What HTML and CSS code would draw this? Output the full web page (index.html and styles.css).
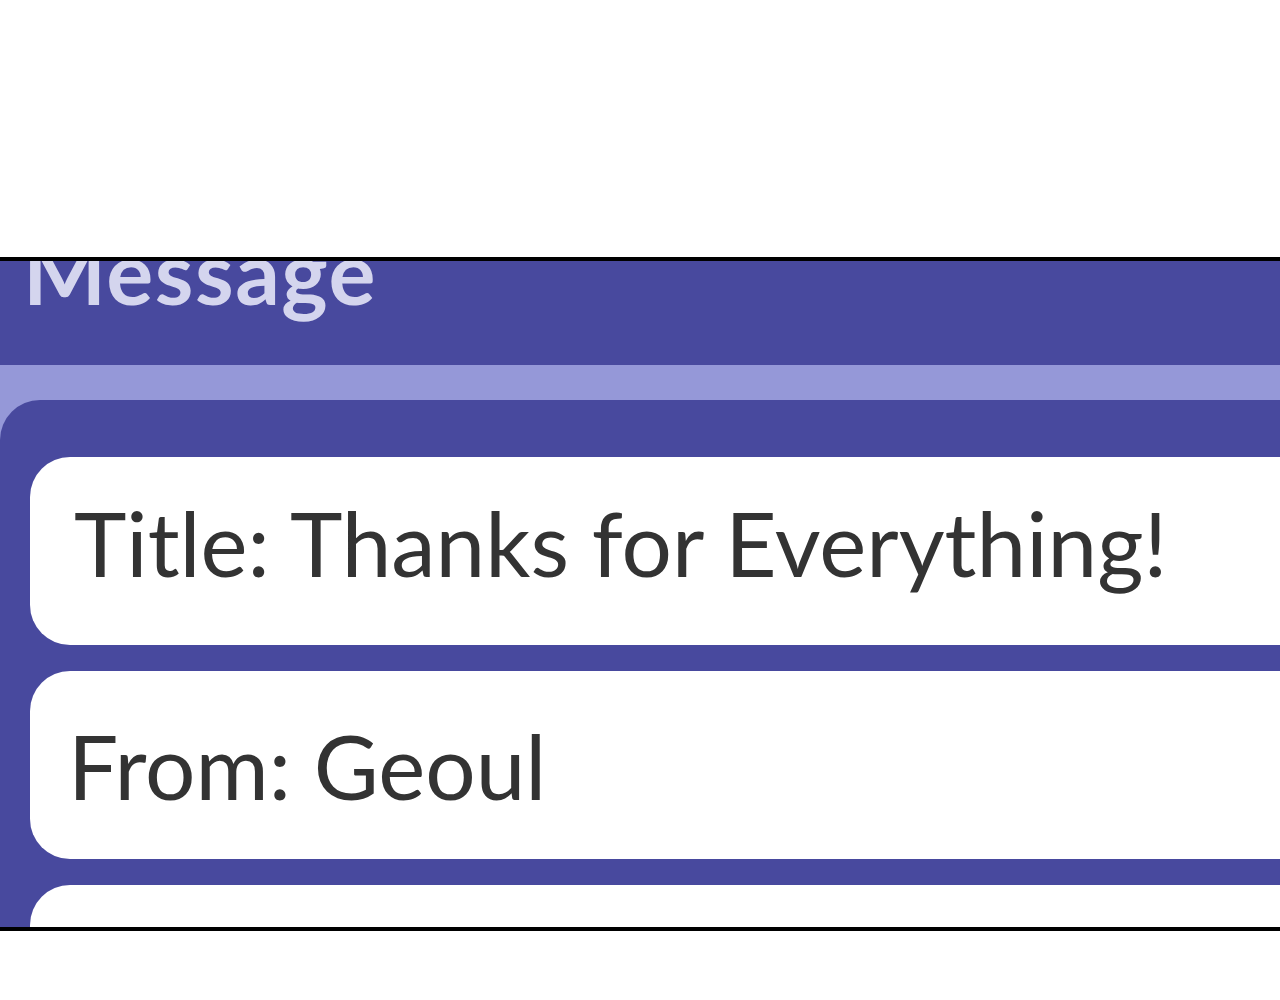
FILE: index.html
```html
<!DOCTYPE html>
<html lang="en">
<head>
    <meta charset="UTF-8">
    <title>Message</title>
    <link rel="stylesheet" href="styles.css">
</head>
<body>
    <div class="frame">
        <!-- Header -->
        <div class="msg-header">
            <h1>Message</h1>
        </div>

        <!-- Message fields -->
        <div class="msg-body">
            <div class="msg-panel">
                <div class="field field-title">Title: Thanks for Everything!</div>
                <div class="field field-from">From: Geoul</div>
                <div class="field"></div>
            </div>
        </div>
    </div>
</body>
</html>
```

FILE: styles.css
```css
:root {
    --purple: #48499e;
    --purple-light: #9598d8;
    --lavender: #d4d5ee;
    --text: #333333;
}

body {
    margin: 0;
    background: #ffffff;
    font-family: 'Lato', 'Open Sans', sans-serif;
}

.frame {
    margin-top: 257px;
    height: 666px;
    border-top: 4px solid #000;
    border-bottom: 4px solid #000;
    overflow: hidden;
    background: var(--purple-light);
}

.msg-header {
    height: 104px;
    background: var(--purple);
    overflow: hidden;
}

.msg-header h1 {
    margin: -45px 0 0 23px;
    font-size: 88px;
    font-weight: 700;
    letter-spacing: 1.5px;
    line-height: 110px;
    color: var(--lavender);
}

.msg-body {
    padding-top: 35px;
}

.msg-panel {
    padding: 57px 0 0 30px;
    height: 600px;
    background: var(--purple);
    border-top-left-radius: 40px;
    display: flex;
    flex-direction: column;
    gap: 26px;
}

.field {
    flex: none;
    box-sizing: border-box;
    height: 188px;
    background: #fff;
    border-radius: 40px 0 0 40px;
    display: flex;
    align-items: center;
    padding-left: 44px;
    font-size: 89px;
    color: var(--text);
}

.field-title {
    padding-bottom: 18px;
}

.field-from {
    padding-left: 38px;
}
```
